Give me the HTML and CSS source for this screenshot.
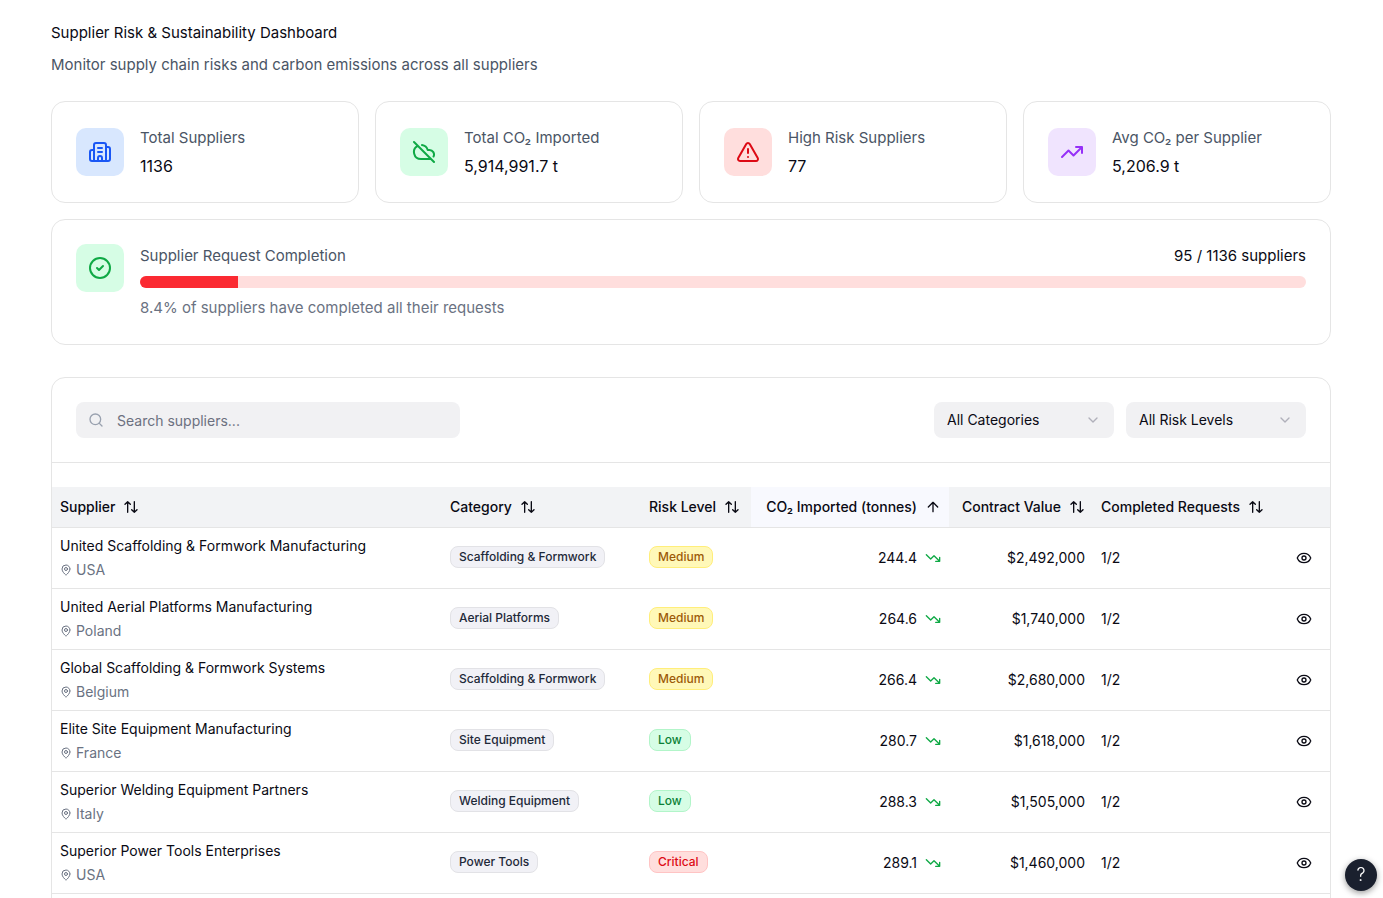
FILE: index.html
```html
<!DOCTYPE html>
<html lang="en">
<head>
    <meta charset="UTF-8">
    <meta name="viewport" content="width=device-width, initial-scale=1.0">
    <title>Supplier Risk &amp; Sustainability Dashboard</title>
    <link rel="stylesheet" href="styles.css">
</head>
<body>
    <!-- Icon sprite -->
    <svg class="sprite" aria-hidden="true">
        <symbol id="i-building" viewBox="0 0 24 24"><path d="M10 12h4M10 8h4M14 21v-3a2 2 0 0 0-4 0v3M6 10H4a2 2 0 0 0-2 2v7a2 2 0 0 0 2 2h16a2 2 0 0 0 2-2V9a2 2 0 0 0-2-2h-2M6 21V5a2 2 0 0 1 2-2h8a2 2 0 0 1 2 2v16"/></symbol>
        <symbol id="i-cloud-off" viewBox="0 0 24 24"><path d="m2 2 20 20M5.782 5.782A7 7 0 0 0 9 19h8.5a4.5 4.5 0 0 0 1.307-.193M21.532 16.5A4.5 4.5 0 0 0 17.5 10h-1.79A7.008 7.008 0 0 0 10 5.07"/></symbol>
        <symbol id="i-alert" viewBox="0 0 24 24"><path d="m21.73 18-8-14a2 2 0 0 0-3.48 0l-8 14A2 2 0 0 0 4 21h16a2 2 0 0 0 1.73-3M12 9v4M12 17h.01"/></symbol>
        <symbol id="i-trend-up" viewBox="0 0 24 24"><path d="M16 7h6v6M22 7l-8.5 8.5-5-5L2 17"/></symbol>
        <symbol id="i-trend-down" viewBox="0 0 24 24"><path d="M16 17h6v-6M22 17l-8.5-8.5-5 5L2 7"/></symbol>
        <symbol id="i-check" viewBox="0 0 24 24"><circle cx="12" cy="12" r="10"/><path d="m9 12 2 2 4-4"/></symbol>
        <symbol id="i-search" viewBox="0 0 24 24"><circle cx="11" cy="11" r="8"/><path d="m21 21-4.3-4.3"/></symbol>
        <symbol id="i-chevron" viewBox="0 0 24 24"><path d="m6 9 6 6 6-6"/></symbol>
        <symbol id="i-sort" viewBox="0 0 24 24"><path d="m21 16-4 4-4-4M17 20V4M3 8l4-4 4 4M7 4v16"/></symbol>
        <symbol id="i-up" viewBox="0 0 24 24"><path d="m5 12 7-7 7 7M12 19V5"/></symbol>
        <symbol id="i-pin" viewBox="0 0 24 24"><path d="M20 10c0 4.993-5.539 10.193-7.399 11.799a1 1 0 0 1-1.202 0C9.539 20.193 4 14.993 4 10a8 8 0 0 1 16 0"/><circle cx="12" cy="10" r="3"/></symbol>
        <symbol id="i-eye" viewBox="0 0 24 24"><path d="M2.062 12.348a1 1 0 0 1 0-.696 10.75 10.75 0 0 1 19.876 0 1 1 0 0 1 0 .696 10.75 10.75 0 0 1-19.876 0"/><circle cx="12" cy="12" r="3"/></symbol>
    </svg>

    <main class="container">
        <header class="page-header">
            <h1>Supplier Risk &amp; Sustainability Dashboard</h1>
            <p>Monitor supply chain risks and carbon emissions across all suppliers</p>
        </header>

        <section class="stats">
            <div class="card stat">
                <div class="stat-icon blue"><svg class="icon icon-lg"><use href="#i-building"/></svg></div>
                <div class="stat-body">
                    <p class="label">Total Suppliers</p>
                    <p>1136</p>
                </div>
            </div>
            <div class="card stat">
                <div class="stat-icon green"><svg class="icon icon-lg"><use href="#i-cloud-off"/></svg></div>
                <div class="stat-body">
                    <p class="label">Total CO₂ Imported</p>
                    <p>5,914,991.7 t</p>
                </div>
            </div>
            <div class="card stat">
                <div class="stat-icon red"><svg class="icon icon-lg"><use href="#i-alert"/></svg></div>
                <div class="stat-body">
                    <p class="label">High Risk Suppliers</p>
                    <p>77</p>
                </div>
            </div>
            <div class="card stat">
                <div class="stat-icon purple"><svg class="icon icon-lg"><use href="#i-trend-up"/></svg></div>
                <div class="stat-body">
                    <p class="label">Avg CO₂ per Supplier</p>
                    <p>5,206.9 t</p>
                </div>
            </div>
        </section>

        <section class="card completion">
            <div class="stat-icon green"><svg class="icon icon-lg"><use href="#i-check"/></svg></div>
            <div class="completion-body">
                <div class="completion-head">
                    <p class="label">Supplier Request Completion</p>
                    <p>95 / 1136 suppliers</p>
                </div>
                <div class="progress"><div class="progress-bar" style="width: 8.4%"></div></div>
                <p class="note">8.4% of suppliers have completed all their requests</p>
            </div>
        </section>

        <section class="card table-card">
            <div class="toolbar">
                <div class="search">
                    <svg class="icon"><use href="#i-search"/></svg>
                    <input type="text" placeholder="Search suppliers..." aria-label="Search suppliers">
                </div>
                <div class="filters">
                    <div class="select">
                        <select aria-label="Category"><option>All Categories</option></select>
                        <svg class="icon"><use href="#i-chevron"/></svg>
                    </div>
                    <div class="select">
                        <select aria-label="Risk level"><option>All Risk Levels</option></select>
                        <svg class="icon"><use href="#i-chevron"/></svg>
                    </div>
                </div>
            </div>

            <table>
                <colgroup>
                    <col>
                    <col class="col-category">
                    <col class="col-risk">
                    <col class="col-co2">
                    <col class="col-value">
                    <col class="col-requests">
                    <col class="col-actions">
                </colgroup>
                <thead>
                    <tr>
                        <th><button class="sort">Supplier <svg class="icon"><use href="#i-sort"/></svg></button></th>
                        <th><button class="sort">Category <svg class="icon"><use href="#i-sort"/></svg></button></th>
                        <th><button class="sort">Risk Level <svg class="icon"><use href="#i-sort"/></svg></button></th>
                        <th class="num sorted"><button class="sort">CO₂ Imported (tonnes) <svg class="icon"><use href="#i-up"/></svg></button></th>
                        <th class="num"><button class="sort">Contract Value <svg class="icon"><use href="#i-sort"/></svg></button></th>
                        <th><button class="sort">Completed Requests <svg class="icon"><use href="#i-sort"/></svg></button></th>
                        <th></th>
                    </tr>
                </thead>
                <tbody>
                    <tr>
                        <td><div class="name">United Scaffolding &amp; Formwork Manufacturing</div><div class="place"><svg class="icon icon-sm"><use href="#i-pin"/></svg>USA</div></td>
                        <td><span class="badge">Scaffolding &amp; Formwork</span></td>
                        <td><span class="badge medium">Medium</span></td>
                        <td><div class="co2">244.4 <svg class="icon"><use href="#i-trend-down"/></svg></div></td>
                        <td class="num">$2,492,000</td>
                        <td>1/2</td>
                        <td><button class="view" aria-label="View supplier"><svg class="icon"><use href="#i-eye"/></svg></button></td>
                    </tr>
                    <tr>
                        <td><div class="name">United Aerial Platforms Manufacturing</div><div class="place"><svg class="icon icon-sm"><use href="#i-pin"/></svg>Poland</div></td>
                        <td><span class="badge">Aerial Platforms</span></td>
                        <td><span class="badge medium">Medium</span></td>
                        <td><div class="co2">264.6 <svg class="icon"><use href="#i-trend-down"/></svg></div></td>
                        <td class="num">$1,740,000</td>
                        <td>1/2</td>
                        <td><button class="view" aria-label="View supplier"><svg class="icon"><use href="#i-eye"/></svg></button></td>
                    </tr>
                    <tr>
                        <td><div class="name">Global Scaffolding &amp; Formwork Systems</div><div class="place"><svg class="icon icon-sm"><use href="#i-pin"/></svg>Belgium</div></td>
                        <td><span class="badge">Scaffolding &amp; Formwork</span></td>
                        <td><span class="badge medium">Medium</span></td>
                        <td><div class="co2">266.4 <svg class="icon"><use href="#i-trend-down"/></svg></div></td>
                        <td class="num">$2,680,000</td>
                        <td>1/2</td>
                        <td><button class="view" aria-label="View supplier"><svg class="icon"><use href="#i-eye"/></svg></button></td>
                    </tr>
                    <tr>
                        <td><div class="name">Elite Site Equipment Manufacturing</div><div class="place"><svg class="icon icon-sm"><use href="#i-pin"/></svg>France</div></td>
                        <td><span class="badge">Site Equipment</span></td>
                        <td><span class="badge low">Low</span></td>
                        <td><div class="co2">280.7 <svg class="icon"><use href="#i-trend-down"/></svg></div></td>
                        <td class="num">$1,618,000</td>
                        <td>1/2</td>
                        <td><button class="view" aria-label="View supplier"><svg class="icon"><use href="#i-eye"/></svg></button></td>
                    </tr>
                    <tr>
                        <td><div class="name">Superior Welding Equipment Partners</div><div class="place"><svg class="icon icon-sm"><use href="#i-pin"/></svg>Italy</div></td>
                        <td><span class="badge">Welding Equipment</span></td>
                        <td><span class="badge low">Low</span></td>
                        <td><div class="co2">288.3 <svg class="icon"><use href="#i-trend-down"/></svg></div></td>
                        <td class="num">$1,505,000</td>
                        <td>1/2</td>
                        <td><button class="view" aria-label="View supplier"><svg class="icon"><use href="#i-eye"/></svg></button></td>
                    </tr>
                    <tr>
                        <td><div class="name">Superior Power Tools Enterprises</div><div class="place"><svg class="icon icon-sm"><use href="#i-pin"/></svg>USA</div></td>
                        <td><span class="badge">Power Tools</span></td>
                        <td><span class="badge critical">Critical</span></td>
                        <td><div class="co2">289.1 <svg class="icon"><use href="#i-trend-down"/></svg></div></td>
                        <td class="num">$1,460,000</td>
                        <td>1/2</td>
                        <td><button class="view" aria-label="View supplier"><svg class="icon"><use href="#i-eye"/></svg></button></td>
                    </tr>
                </tbody>
            </table>
        </section>
    </main>

    <button class="help" aria-label="Help">?</button>
</body>
</html>
```

FILE: styles.css
```css
* {
    box-sizing: border-box;
}
body {
    margin: 0;
    font-family: Inter, "Liberation Sans", sans-serif;
    font-size: 16px;
    line-height: 24px;
    background: #fff;
    color: #0a0a14;
}
h1, p {
    margin: 0;
    font-size: 16px;
    font-weight: 400;
}
button, input, select {
    font: inherit;
    color: inherit;
}
.sprite {
    display: none;
}
.icon {
    width: 16px;
    height: 16px;
    flex-shrink: 0;
    fill: none;
    stroke: currentColor;
    stroke-width: 2;
    stroke-linecap: round;
    stroke-linejoin: round;
}
.icon-lg {
    width: 24px;
    height: 24px;
}
.icon-sm {
    width: 12px;
    height: 12px;
}
.container {
    max-width: 1281px;
    margin: 0 auto;
    padding: 21px 1px 0 0;
}
.page-header {
    display: grid;
    gap: 8px;
    margin-bottom: 24px;
}
.page-header h1,
.page-header p,
.completion p,
.label {
    font-size: 15px;
}
.page-header p,
.label {
    color: #4a5565;
}
.card {
    border: 1px solid #e5e5e5;
    border-radius: 14px;
    background: #fff;
}

/* Stat cards */
.stats {
    display: grid;
    grid-template-columns: repeat(4, 1fr);
    gap: 16px;
    margin-bottom: 16px;
}
.stat {
    display: flex;
    align-items: center;
    gap: 16px;
    padding: 24px;
}
.stat-body {
    display: grid;
    gap: 4px;
}
.stat .label {
    font-size: 15px;
}
.stat-icon {
    display: flex;
    align-items: center;
    justify-content: center;
    width: 48px;
    height: 48px;
    flex-shrink: 0;
    border-radius: 10px;
}
.blue {
    background: #d8e7fe;
    color: #1a57f5;
}
.green {
    background: #d6fde5;
    color: #0fa945;
}
.red {
    background: #ffdedd;
    color: #dd0a15;
}
.purple {
    background: #f0e4fe;
    color: #9630f8;
}

/* Completion */
.completion {
    display: flex;
    gap: 16px;
    padding: 24px;
    margin-bottom: 32px;
}
.completion-body {
    flex: 1;
    display: grid;
    gap: 8px;
}
.completion-head {
    display: flex;
    justify-content: space-between;
}
.progress {
    height: 12px;
    border-radius: 6px;
    background: #ffdedd;
    overflow: hidden;
}
.progress-bar {
    height: 100%;
    background: #fb2a32;
}
.note {
    color: #6a7282;
}

/* Supplier table */
.table-card {
    padding-bottom: 24px;
    font-size: 14px;
}
.toolbar {
    display: flex;
    justify-content: space-between;
    padding: 24px;
    border-bottom: 1px solid #e5e5e5;
    margin-bottom: 24px;
}
.search,
.select {
    position: relative;
}
.search {
    width: 384px;
}
.search input,
.select select {
    width: 100%;
    height: 36px;
    border: 0;
    border-radius: 8px;
    background: #f1f1f3;
    appearance: none;
}
.search input {
    padding: 1px 12px 0 41px;
}
.search input::placeholder {
    color: #6c7080;
    opacity: 1;
}
.search .icon {
    position: absolute;
    left: 12px;
    top: 10px;
    color: #99a1af;
}
.filters {
    display: flex;
    gap: 12px;
}
.select {
    width: 180px;
}
.select select {
    padding: 0 36px 0 13px;
}
.select .icon {
    position: absolute;
    right: 13px;
    top: 10px;
    color: #717182;
    opacity: 0.5;
    pointer-events: none;
}
table {
    width: 100%;
    table-layout: fixed;
    border-collapse: collapse;
}
.col-category {
    width: 199px;
}
.col-risk {
    width: 110px;
}
.col-co2 {
    width: 198px;
}
.col-value {
    width: 144px;
}
.col-requests {
    width: 184px;
}
.col-actions {
    width: 53px;
}
th {
    height: 40px;
    padding: 0 8px;
    background: #f2f3f5;
    border-bottom: 1px solid #e5e5e5;
    text-align: left;
    white-space: nowrap;
}
td {
    height: 61px;
    padding: 6px 8px;
    border-bottom: 1px solid #e5e5e5;
}
.num {
    text-align: right;
}
.sorted {
    background: #f8f9fe;
}
.sort {
    display: inline-flex;
    align-items: center;
    gap: 8px;
    padding: 0;
    border: 0;
    background: none;
    font-weight: 500;
    vertical-align: middle;
    cursor: pointer;
}
.place {
    display: flex;
    align-items: center;
    gap: 4px;
    color: #6a7282;
}
.badge {
    display: inline-block;
    padding: 2px 8px;
    border: 1px solid #e2e2e6;
    border-radius: 8px;
    background: #f1f1f6;
    color: #1e2939;
    font-size: 12px;
    font-weight: 500;
    line-height: 16px;
    vertical-align: top;
}
.medium {
    background: #fff8b8;
    border-color: #ffee7a;
    color: #9c5a08;
}
.low {
    background: #d6fde5;
    border-color: #b2f5c9;
    color: #0a7f36;
}
.critical {
    background: #ffdedd;
    border-color: #ffc4c4;
    color: #dd0a15;
}
.co2 {
    display: flex;
    align-items: center;
    justify-content: flex-end;
    gap: 8px;
}
.co2 .icon {
    color: #0fa945;
}
.view {
    display: flex;
    align-items: center;
    justify-content: center;
    width: 38px;
    height: 32px;
    padding: 0;
    border: 0;
    background: none;
    cursor: pointer;
}
.help {
    position: fixed;
    right: 6px;
    bottom: 7px;
    width: 32px;
    height: 32px;
    padding: 0;
    border: 0;
    border-radius: 50%;
    background: #1a202e;
    color: #fff;
    font-size: 18px;
    font-weight: 300;
    box-shadow: 0 2px 6px rgba(0, 0, 0, 0.4);
    cursor: pointer;
}
```
